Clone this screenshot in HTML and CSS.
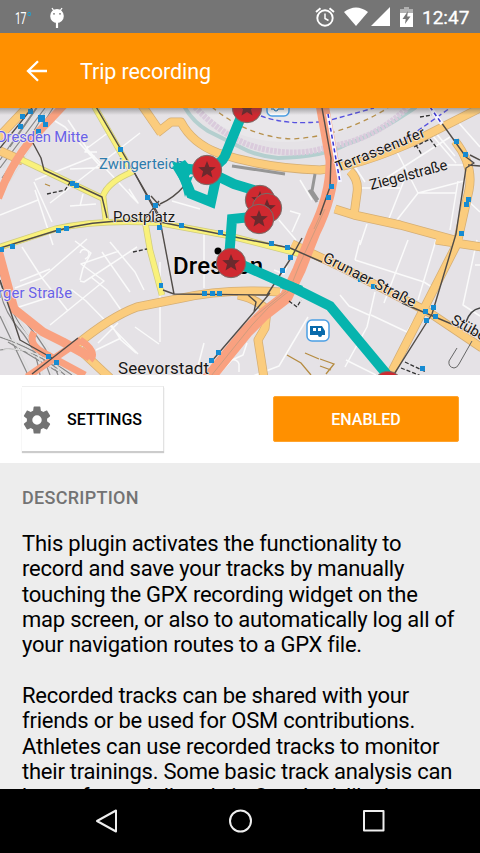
FILE: index.html
```html
<!DOCTYPE html>
<html lang="en">
<head>
<meta charset="utf-8">
<title>Trip recording</title>
<link rel="stylesheet" href="styles.css">
</head>
<body>
<div class="screen">
  <header class="status">
    <span class="temp">17<i class="degree"></i></span>
    <svg class="droid" width="16" height="22" viewBox="0 0 16 22"><path d="M3 1l2 3M13 1l-2 3" stroke="#fff" stroke-width="1.3"/><ellipse cx="8" cy="9" rx="6.8" ry="7" fill="#fff"/><path d="M8 15v6" stroke="#fff" stroke-width="2.2"/><circle cx="5" cy="6.8" r=".9" fill="#757575"/><circle cx="11" cy="6.8" r=".9" fill="#757575"/></svg>
    <div class="spacer"></div>
    <svg class="alarm" width="20" height="20" viewBox="0 0 20 20" fill="none" stroke="#fff"><circle cx="10" cy="11" r="7.7" stroke-width="1.9"/><path d="M10 6.5v5l3.5 2" stroke-width="1.5"/><path d="M1 5l4.5-3.8M19 5l-4.5-3.8" stroke-width="1.9"/></svg>
    <svg class="wifi" width="24" height="19" viewBox="0 0 24 19"><path d="M0 5Q12-4 24 5L12 19z" fill="#fff"/></svg>
    <svg class="signal" width="19" height="19" viewBox="0 0 19 19"><path d="M19 0v19H0z" fill="#fff"/></svg>
    <svg class="battery" width="13" height="20" viewBox="0 0 13 20"><path d="M0 2h4V0h5v2h4v4H0z" fill="#b0b0b0"/><path d="M0 6h13v14H0z" fill="#fff"/><path d="M8 4L2.5 12h3.2L5 17l5.5-7.5H7.2z" fill="#757575"/></svg>
    <span class="clock">12:47</span>
  </header>
  <div class="toolbar">
    <svg class="back" width="22" height="22" viewBox="0 0 22 22" fill="none" stroke="#fff" stroke-width="2.3"><path d="M21 11H2M12 1.2L2 11l10 9.8"/></svg>
    <h1>Trip recording</h1>
  </div>
  <svg class="map" width="480" height="267" viewBox="0 108 480 267">
    <defs>
      <path id="star" d="M0-9L2.4-3 8.8-2.7 3.9 1.3 5.5 7.5 0 4-5.5 7.5-3.9 1.3-8.8-2.7-2.4-3z"/>
      <g id="pin"><circle r="14.7" fill="#cf2930" stroke="#74706b"/><use href="#star" fill="#6b292d"/></g>
      <linearGradient id="shade" x2="0" y2="1"><stop offset="0" stop-color="#444" stop-opacity=".4"/><stop offset="1" stop-color="#444" stop-opacity="0"/></linearGradient>
      <path id="tracks" d="M0 168L45 108M7 181L53 108M0 160L36 108M10 147L37 108M2 178L29 139L45 112M0 272Q6 300 27 324T58 375M0 282Q12 316 28 336T50 375M0 290Q4 312 20 330T40 375M0 316L28 375M0 337Q34 348 72 375M0 350Q30 344 65 375M8 342L58 372"/>
    </defs>
    <path d="M0 108h480v267H0z" fill="#e5e2e6"/>
    <path d="M195 108Q235 142 286 142T385 108z" fill="#e9e7ea"/>
    <g class="side">
      <path d="M55 121l10 6 35 39-14-17 23-17M68 120l20 30 50 53-8-8M35 190l18 55M35 180l60-24M70 169l70-3 M50 203l90-70M88 146l-3 6 12 0M0 215l38-15M34 182l18 40M83 194l-3 12M70 206l26-2M138 203l-9-14"/>
      <path d="M22 247l20 31-27 10M42 278l15-13 30-26M42 278l26 33M19 307l53-17 14 11 52 53M50 325l54-44-23-17 38-13M80 280l3-12 8-15-16-12M102 252l28 40M110 242l25 30 9 18M107 290l-16-13M98 343l20-20M107 290l14 20M110 323l11 17 15 13M121 338l-25 12M135 327l24 17M80 281l4 1 53-35M20 281l30-12"/>
      <path d="M80 253q2-6 8-2 3 5-3 8M195 141l20 15M172 201l28 8M204 232v56M290 211l10 3-8 18M279 220l17 20M274 270l10 4 3-8M160 262v80M204 343l-7 27M247 343l-4 12-11 5-14 15M232 360q5-1 7 4v8M308 317l-29 49-26 10M300 180l12 20"/>
      <path d="M380 182l70-45M396 150l22 43 46-12M405 178l-17 43M418 193l-25 32M435 132l20 24M432 135l24 28M458 181l-8 49M360 188h40M418 193h38M458 122l22 25M474 165h-30M467 200l13 12M367 224l-7 21M365 182l-10-15"/>
      <path d="M408 240l-24 63M436 240l-18 60M355 260l69 22 14 9M360 240l-5 20M375 292l-8 35-22 40M340 295l9 11 20 9M371 315l36 17 7-12M477 240l-14 65 17 11M346 360l30 15M475 265h5"/>
    </g>
    <path d="M184 106Q192 121 208 131L240 147Q256 156 278 158Q324 157 347 144Q375 135 416 107" fill="none" stroke="#b4cfcf" stroke-width="4"/>
    <path d="M195 107Q227 141 263 149T328 147Q374 140 407 108" fill="none" stroke="#dacbdc" stroke-width="6" stroke-dasharray="3 1"/>
    <path d="M212 107Q246 136 291 139Q340 137 388 108" fill="none" stroke="#b7914c" stroke-width="1.3" stroke-dasharray="5 4"/>
    <path d="M261 116Q288 126 327 121L374 108M360 158L409 137 450 108" fill="none" stroke="#5752df" stroke-width="1.4" stroke-dasharray="5 3"/>
    <g fill="none" stroke="#888" stroke-width="1.2"><use href="#tracks"/><use href="#tracks" x="3" stroke="#dedede"/></g>
    <g class="road-edge">
      <path d="M-3 139L30 104M141 104L161 133M0 151L23 161M157 133L171 122 181 122Q192 143 218 153Q263 168 320 170Q360 166 419 139L482 107M350 171Q359 180 357 193L354 215M335 209L354 215 400 225 462 242M455 141Q474 165 469 190L457 244 389 377M436 240L482 247M292 244L345 269 430 313 482 348M75 346Q110 317 137 307L177 299Q224 288 280 292M238 295Q255 298 267 310L265 328 258 340 264 378M80 350L110 378"/>
    </g>
    <g class="road">
      <path d="M-3 139L30 104M141 104L161 133M0 151L23 161M157 133L171 122 181 122Q192 143 218 153Q263 168 320 170Q360 166 419 139L482 107M350 171Q359 180 357 193L354 215M335 209L354 215 400 225 462 242M455 141Q474 165 469 190L457 244 389 377M436 240L482 247M292 244L345 269 430 313 482 348M75 346Q110 317 137 307L177 299Q224 288 280 292M238 295Q255 298 267 310L265 328 258 340 264 378M80 350L110 378"/>
    </g>
    <g class="yellow-edge"><path d="M93 104L132 172Q108 182 103 196L106 221M20 159L58 177 102 198M-3 248L55 229Q100 219 160 223L230 236 300 254M145 221L150 250 162 295"/></g>
    <g class="yellow"><path d="M93 104L132 172Q108 182 103 196L106 221M20 159L58 177 102 198M-3 248L55 229Q100 219 160 223L230 236 300 254M145 221L150 250 162 295"/></g>
    <g class="salmon">
      <path d="M-2 198Q10 166 30 141L64 105" stroke-width="8"/>
      <path d="M-2 250L14 309 43 332 63 342 90 357" stroke-width="9"/>
      <path d="M27 377L81 340M34 332Q27 345 46 354L85 375M80 340Q98 352 90 360" stroke-width="7"/>
      <path d="M207 380L247 331 264 314 286 297 299 270 314 232Q333 194 332 160L322 104" stroke-width="13"/>
    </g>
    <path d="M211 376L252 325 269 307 289 291 299 266 313 235 325 209M286 291l-32 26M314 229L323 209" fill="none" stroke="#cf9c7d" stroke-width="1"/>
    <g class="tram">
      <path d="M95 105L134 172 160 220 174 294 267 295 291 258 302 238M33 143l8 15 3 12 58 27 5 21M0 148l32-40M0 280l20 60 32 18M0 248L55 231Q105 217 160 222L290 248 322 262M402 303L480 336M211 362L254 312 270 293M163 290l11 4M32 374L78 338M322 108L331 158 330 187 320 215M431 108l35 49 8 6-8 5-10 66-24 80-41 65M470 155l10 5M468 165l12 1M248 295l8 7-2 10"/>
      <path d="M145 219l14-18M160 206l-9-10M160 204Q174 198 185 185M134 172l26 45"/>
    </g>
    <path d="M328 114l12 68M430 107l12 17" stroke="#f5f5ff" stroke-width="4"/><path d="M328 114l12 68M430 107l12 17" stroke="#3934d2" stroke-width="1.5" stroke-dasharray="4 3"/>
    <g class="dash"><path d="M47 194l18-4 6-9M416 145l6 10M414 147l16-8 6 8M420 117l12-2M133 252l14-3M289 301l8 6 4-7M405 362l21 10M401 368l20 8"/></g>
    <path d="M45 184l5 2M305 353l14 6M287 355l14 8 10 12M320 359l14 5-8 10M320 366l11 4" fill="none" stroke="#b58b40" stroke-width="1.3"/>
    <path d="M457 348l-8 13q-1 6 5 7 3 0 5-4l13-23" fill="none" stroke="#666" stroke-width="1"/><path d="M466 322q4-12 14-14" fill="none" stroke="#444" stroke-width="1.5"/>
    <path d="M315 174l-3 17 6 9M309 190l8 12M232 166l53 8" fill="none" stroke="#969696" stroke-width="3"/>
    <g class="stops">
      <path d="M28 109h5v5h-5zM20 114h5v5h-5zM18 124h5v5h-5zM38 115h7v7h-7zM36 129h5v5h-5zM43 122h5v5h-5zM118 147h5v5h-5zM70 181h5v5h-5zM74 183h5v5h-5zM145 195h5v5h-5zM153 203h5v5h-5zM157 225h5v5h-5zM56 228h5v5h-5zM64 226h5v5h-5zM10 244h5v5h-5zM0 247h4v5H0zM159 283h4v5h-4z"/>
      <path d="M179 223h5v5h-5zM218 230h5v5h-5zM269 241h5v5h-5zM285 245h5v5h-5zM288 255h5v5h-5zM280 268h5v5h-5zM202 291h5v5h-5zM210 291h5v5h-5zM217 291h5v5h-5zM216 350h5v5h-5zM209 358h5v5h-5zM46 354h5v5h-5zM54 360h5v5h-5zM329 184h5v5h-5zM326 195h5v5h-5zM454 139h5v5h-5zM463 152h5v5h-5zM466 197h5v5h-5zM464 202h5v5h-5zM459 231h5v5h-5zM371 284h5v5h-5zM358 278h4v4h-4zM423 309h5v5h-5zM431 305h5v5h-5zM433 314h5v5h-5zM424 318h5v5h-5zM420 366h5v5h-5z"/>
    </g>
    <g class="labels">
      <text class="violet" x="-3" y="142" textLength="91">Dresden Mitte</text>
      <text class="water" x="99" y="169" textLength="85">Zwingerteich</text>
      <text x="113" y="222" textLength="62">Postplatz</text>
      <text class="violet" x="-2" y="298" textLength="74">rger Straße</text>
      <text class="district" x="118" y="374" textLength="91">Seevorstadt</text>
      <text class="city" x="173" y="274" textLength="90">Dresden</text>
      <text x="338" y="172" textLength="95" transform="rotate(-22 338 172)">Terrassenufer</text>
      <text x="371" y="190" textLength="80" transform="rotate(-15 371 190)">Ziegelstraße</text>
      <text x="322" y="261" textLength="102" transform="rotate(27 322 261)">Grunaer Straße</text>
      <text x="450" y="323" transform="rotate(29 450 323)">Stübelallee</text>
    </g>
    <circle cx="218" cy="251" r="3.5"/>
    <path d="M243 112L225 156Q221 165 208 167M209 172L234 184 260 192M207 171L180 168 191 194 211 202 217 174M260 216L232 219 229 259 292 287 330 306 389 377" fill="none" stroke="#06b4ae" stroke-width="10"/>
    <path d="M172 167l13-7 8 10-10 15zM181 181l12-5-8 21zM284 279l19 7-5 8-18-6z" fill="#06b4ae"/>
    <use href="#pin" x="247" y="108"/><use href="#pin" x="207" y="170"/><use href="#pin" x="260" y="200"/><use href="#pin" x="267" y="208"/><use href="#pin" x="259" y="219"/><use href="#pin" x="231" y="263"/><use href="#pin" x="388" y="386"/>
    <rect x="307" y="320" width="22" height="21" rx="5" fill="#fff" stroke="#4a9ee4" stroke-width="1.5"/>
    <path d="M310 326h12l3 5v4h-3a2 2 0 0 1-4 0h-8z" fill="#086aab"/><path d="M313 328h3v3h-3zM318 328h3v3h-3z" fill="#fff"/>
    <rect x="267" y="96" width="22" height="20" rx="5" fill="#fff" stroke="#4a9ee4" stroke-width="1.500"/><path d="M271 109h3a2 2 0 0 0 4 0h6" stroke="#086aab" fill="none"/>
    <path d="M0 108h480v7H0z" fill="url(#shade)"/>
  </svg>
  <section class="actions">
    <button class="settings">
      <svg width="30" height="30" viewBox="2 2 20 20"><path fill="#737373" d="M19.430 12.980c.04-.32.070-.64.070-.98s-.03-.66-.07-.98l2.110-1.650c.19-.15.240-.42.120-.64l-2-3.460c-.12-.22-.39-.3-.61-.22l-2.490 1c-.52-.4-1.080-.73-1.690-.98l-.38-2.650C14.460 2.180 14.250 2 14 2h-4c-.25 0-.46.180-.49.420l-.38 2.650c-.61.250-1.170.590-1.690.980l-2.490-1c-.23-.09-.49 0-.61.220l-2 3.460c-.13.220-.07.490.120.640l2.110 1.650c-.04.320-.07.650-.07.980s.03.660.070.980l-2.110 1.650c-.19.150-.24.420-.12.640l2 3.460c.12.220.390.300.610.220l2.490-1c.52.400 1.080.730 1.690.980l.38 2.650c.03.240.240.420.490.420h4c.25 0 .46-.18.490-.42l.38-2.650c.61-.25 1.170-.59 1.690-.98l2.490 1c.23.090.490 0 .61-.22l2-3.460c.12-.22.070-.49-.12-.64zM12 15.500A3.500 3.500 0 1 1 12 8.500a3.500 3.500 0 0 1 0 7z" transform="translate(1.200 1.200) scale(.9)"/></svg>
      <span>SETTINGS</span>
    </button>
    <button class="enabled">ENABLED</button>
  </section>
  <main class="content">
    <h2>DESCRIPTION</h2>
    <p>This plugin activates the functionality to<br>record and save your tracks by manually<br>touching the GPX recording widget on the<br>map screen, or also to automatically log all of<br>your navigation routes to a GPX file.</p>
    <p>Recorded tracks can be shared with your<br>friends or be used for OSM contributions.<br>Athletes can use recorded tracks to monitor<br>their trainings. Some basic track analysis can<br>be performed directly in OsmAnd, like lap</p>
  </main>
  <nav class="navbar">
    <svg width="24" height="26" viewBox="0 0 24 26"><path d="M21 2.500v21L2 13z"/></svg>
    <svg width="24" height="26" viewBox="0 0 24 26"><circle cx="11.500" cy="13" r="10.500"/></svg>
    <svg width="24" height="26" viewBox="0 0 24 26"><path d="M2 3h19.500v19.500H2z"/></svg>
  </nav>
</div>
</body>
</html>
```
FILE: styles.css
```css
* { box-sizing: border-box; }
body { margin: 0; font-family: Roboto, sans-serif; background: #ededed; }
svg { display: block; flex: none; }
.screen { width: 480px; height: 853px; display: flex; flex-direction: column; overflow: hidden; }
.status { height: 33px; flex: none; background: #757575; color: #fff; display: flex; align-items: flex-start; padding: 7px 11px 0 15px; }
.temp { width: 34px; display: flex; font: 400 17px/22px Roboto, sans-serif; letter-spacing: -.5px; transform: scaleX(.62); transform-origin: left; }
.degree { width: 6px; height: 4px; border: 1.500px solid #16a8dc; border-radius: 50%; margin: 5px 0 0 2px; }
.spacer { flex: 1; }
.alarm { margin-right: 1px; }
.wifi { margin-left: 8px; }
.signal { margin-left: 3px; }
.battery { margin-left: 10px; }
.clock { width: 47px; margin-left: 9px; font-size: 19px; line-height: 22px; font-weight: 400; -webkit-text-stroke: .3px #fff; }
.toolbar { height: 75px; flex: none; display: flex; align-items: center; padding: 1px 0 0 26px; gap: 32px; background: #ff9000; color: #fff; }
h1 { margin: 2px 0 0; font-size: 21.500px; line-height: 28px; font-weight: 400; letter-spacing: -.1px; }
.map { flex: none; }
.map g { stroke-linejoin: round; }
.side, .road-edge, .road, .yellow-edge, .yellow, .salmon, .tram, .dash { fill: none; }
.side { stroke: #fafafa; stroke-width: 1.500; }
.road-edge { stroke: #d5ae74; stroke-width: 9; }
.road { stroke: #fbcc7d; stroke-width: 7.500; }
.yellow-edge { stroke: #cfcb80; stroke-width: 6.500; }
.yellow { stroke: #f9f17b; stroke-width: 5; }
.salmon { stroke: #f9a180; }
.tram { stroke: #514c48; stroke-width: 1.400; }
.dash { stroke: #333; stroke-width: 1.300; stroke-dasharray: 4 2; }
.stops { fill: #168bd2; }
.labels { font-size: 14.800px; fill: #171717; stroke: #eee9e9; stroke-width: 1.500px; paint-order: stroke; }
.labels .violet { fill: #6861e8; }
.labels .water { fill: #2d7cae; }
.labels .district { font-size: 17px; }
.labels .city { font-size: 24px; font-weight: 500; fill: #000; }
.actions { height: 88px; flex: none; background: #fff; display: flex; justify-content: space-between; padding: 11px 21px 0 22px; }
button { border: 0; padding: 0; font: 500 16px/20px Roboto, sans-serif; }
.settings { width: 142px; height: 65px; display: flex; align-items: center; gap: 15px; padding: 1px 0 0; background: #fff; color: #000; border-top: 1px solid #eee; border-right: 1px solid #e2e2e2; box-shadow: 0 2px 1px #ccc; }
.enabled { width: 186px; height: 46px; margin-top: 10px; padding-top: 1px; border-radius: 2px; background: #ff9000; color: #fff; border: 1px solid #ffa42e; }
.content { flex: 1; min-height: 0; overflow: hidden; background: #ededed; padding: 24px 0 0 22px; color: #000; }
h2 { margin: 0 0 22px; font-size: 18px; line-height: 22px; font-weight: 500; letter-spacing: .28px; color: #737373; }
p { margin: 0 0 25.400px; font-size: 22px; line-height: 25.330px; letter-spacing: -.23px; white-space: nowrap; }
.navbar { height: 64px; flex: none; background: #000; display: flex; justify-content: space-between; padding: 19px 94px 0 95px; }
.navbar svg { fill: none; stroke: #eee; stroke-width: 2; stroke-linejoin: round; }
```
